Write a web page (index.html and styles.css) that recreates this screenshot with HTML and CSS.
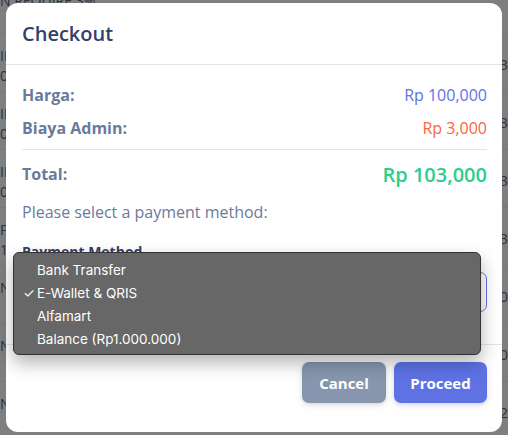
FILE: index.html
```html
<!DOCTYPE html>
<html>
<head>
<meta charset="utf-8">
<link rel="stylesheet" href="styles.css">
</head>
<body>
<div class="page">
  <div class="bg-head">N REQUIRE 3%</div>
  <div class="bg-row"><div class="bg-cell"><span>ID</span><span>0</span></div><div class="bg-right">3</div></div>
  <div class="bg-row"><div class="bg-cell"><span>ID</span><span>0</span></div><div class="bg-right">3</div></div>
  <div class="bg-row"><div class="bg-cell"><span>ID</span><span>0</span></div><div class="bg-right">3</div></div>
  <div class="bg-row"><div class="bg-cell"><span>Pu</span><span>15</span></div><div class="bg-right">3</div></div>
  <div class="bg-row"><div class="bg-cell"><span>N</span></div><div class="bg-right">0</div></div>
  <div class="bg-row"><div class="bg-cell"><span>N</span></div><div class="bg-right">0</div></div>
  <div class="bg-row"><div class="bg-cell"><span>N</span></div><div class="bg-right">2</div></div>
</div>
<div class="overlay"></div>

<div class="modal">
  <div class="modal-header">
    <h2 class="modal-title">Checkout</h2>
  </div>
  <div class="modal-body">
    <div class="line-row">
      <span class="label">Harga:</span>
      <span class="value price">Rp 100,000</span>
    </div>
    <div class="line-row second">
      <span class="label">Biaya Admin:</span>
      <span class="value fee">Rp 3,000</span>
    </div>
    <hr class="divider">
    <div class="line-row total-row">
      <span class="label">Total:</span>
      <span class="value total">Rp 103,000</span>
    </div>
    <p class="hint">Please select a payment method:</p>
    <label class="field-label">Payment Method</label>
    <div class="select-box"><span>E-Wallet &amp; QRIS</span></div>
  </div>
  <div class="modal-footer">
    <button class="btn btn-cancel">Cancel</button>
    <button class="btn btn-proceed">Proceed</button>
  </div>
</div>

<div class="menu">
  <div class="menu-item">Bank Transfer</div>
  <div class="menu-item selected"><span class="check">✓</span>E-Wallet &amp; QRIS</div>
  <div class="menu-item">Alfamart</div>
  <div class="menu-item">Balance (Rp1.000.000)</div>
</div>
</body>
</html>
```

FILE: styles.css
```css
* { box-sizing: border-box; }
html, body { margin: 0; padding: 0; }
body {
  width: 508px;
  height: 435px;
  overflow: hidden;
  background: #ffffff;
  font-family: "Open Sans", "Noto Sans", sans-serif;
  position: relative;
}

.page {
  color: #5a6378;
  font-size: 14px;
  font-weight: 400;
}
.bg-head {
  height: 40px;
  line-height: 14px;
  margin-top: -6px;
  border-bottom: 1px solid #eceef1;
}
.bg-row {
  height: 58px;
  display: flex;
  justify-content: space-between;
  border-bottom: 1px solid #eceef1;
  padding-top: 12px;
}
.bg-cell {
  display: flex;
  flex-direction: column;
  line-height: 20px;
}
.bg-right {
  padding-top: 8px;
  font-size: 15px;
}

.overlay {
  position: absolute;
  inset: 0;
  background: rgba(0, 0, 0, 0.5);
}

.modal {
  position: absolute;
  left: 6px;
  top: 3px;
  width: 496px;
  height: 429px;
  background: #ffffff;
  border-radius: 12px;
  display: flex;
  flex-direction: column;
}
.modal-header {
  padding: 16px 16px;
  border-bottom: 1px solid #e3e5e9;
}
.modal-title {
  margin: 0;
  font-size: 20px;
  line-height: 29px;
  font-weight: 600;
  color: #32406a;
}

.modal-body {
  padding: 18px 15px 0 16px;
  height: 280px;
  border-bottom: 1px solid #e3e5e9;
}
.line-row {
  display: flex;
  justify-content: space-between;
  align-items: center;
  height: 24px;
}
.line-row.second { margin-top: 9px; }
.label {
  font-size: 16px;
  font-weight: 700;
  color: #6b7a9b;
}
.value { font-size: 16px; }
.price { color: #5e72e4; }
.fee { color: #fb6340; }
.divider {
  margin: 9px 0 0 0;
  border: 0;
  border-top: 1px solid #e3e5e9;
}
.total-row {
  margin-top: 10px;
  height: 28px;
}
.total {
  font-size: 20px;
  font-weight: 600;
  color: #2dce89;
}
.hint {
  margin: 13px 0 0 0;
  font-size: 16px;
  line-height: 22px;
  color: #6b7a9b;
}
.field-label {
  display: block;
  margin-top: 19px;
  font-size: 14px;
  font-weight: 700;
  line-height: 20px;
  color: #32406a;
}
.select-box {
  margin-top: 10px;
  height: 40px;
  border: 1px solid #5e72e4;
  border-radius: 7px;
  padding: 0 12px;
  display: flex;
  align-items: center;
  font-size: 14px;
  color: #32406a;
}

.modal-footer {
  display: flex;
  justify-content: flex-end;
  gap: 8px;
  padding: 17px 15px 0 16px;
}
.btn {
  height: 41px;
  border: 0;
  border-radius: 7px;
  font-family: "Open Sans", "Noto Sans", sans-serif;
  font-size: 15px;
  font-weight: 700;
  color: #ffffff;
  box-shadow: 0 3px 6px rgba(50, 50, 93, 0.12), 0 1px 3px rgba(0, 0, 0, 0.08);
}
.btn-cancel { width: 84px; background: #8796ae; }
.btn-proceed { width: 93px; background: #5e72e4; }

.menu {
  position: absolute;
  left: 13px;
  top: 252px;
  width: 468px;
  height: 103px;
  background: #666766;
  border: 1px solid #333333;
  border-radius: 6px;
  padding-top: 6px;
  box-shadow: 0 8px 18px rgba(0, 0, 0, 0.3);
  font-family: "Inter", "Liberation Sans", sans-serif;
  font-size: 13.5px;
  color: #ffffff;
}
.menu-item {
  position: relative;
  height: 23px;
  line-height: 23px;
  padding-left: 23px;
}
.check {
  position: absolute;
  left: 9px;
  top: 0;
}
```
